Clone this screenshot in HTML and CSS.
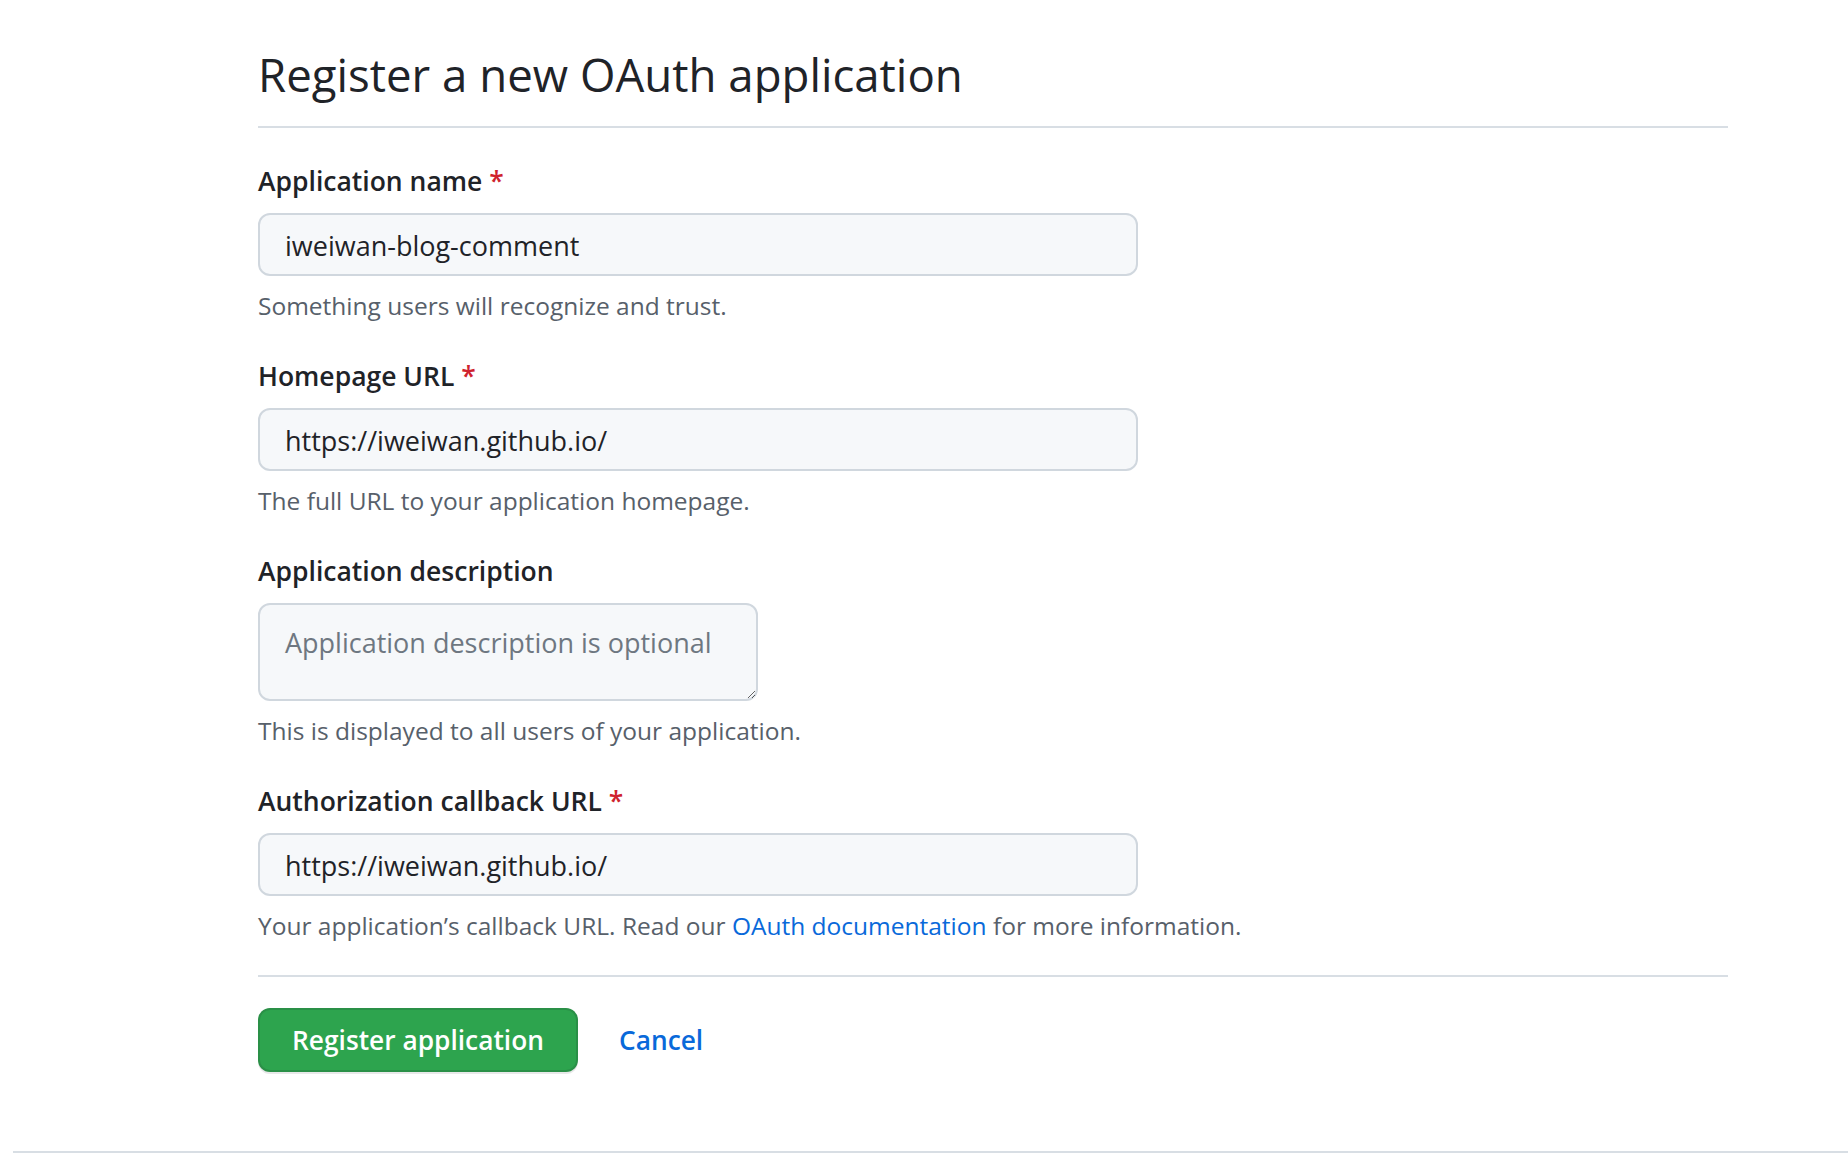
FILE: index.html
```html
<!DOCTYPE html>
<html lang="en">
<head>
<meta charset="utf-8">
<title>Register a new OAuth application</title>
<link rel="stylesheet" href="styles.css">
</head>
<body>
<main class="page">
  <div class="subhead">
    <h1 class="subhead-heading">Register a new OAuth application</h1>
  </div>
  <form class="oauth-form">
    <div class="form-group">
      <label class="form-label" for="app-name">Application name <span class="required">*</span></label>
      <input class="form-control" id="app-name" type="text" value="iweiwan-blog-comment">
      <p class="note">Something users will recognize and trust.</p>
    </div>
    <div class="form-group">
      <label class="form-label" for="app-url">Homepage URL <span class="required">*</span></label>
      <input class="form-control" id="app-url" type="text" value="https://iweiwan.github.io/">
      <p class="note">The full URL to your application homepage.</p>
    </div>
    <div class="form-group">
      <label class="form-label" for="app-desc">Application description</label>
      <textarea class="form-control textarea" id="app-desc" placeholder="Application description is optional"></textarea>
      <p class="note">This is displayed to all users of your application.</p>
    </div>
    <div class="form-group">
      <label class="form-label" for="app-cb">Authorization callback URL <span class="required">*</span></label>
      <input class="form-control" id="app-cb" type="text" value="https://iweiwan.github.io/">
      <p class="note">Your application’s callback URL. Read our <a class="link" href="#">OAuth documentation</a> for more information.</p>
    </div>
    <div class="form-actions">
      <button class="btn-primary" type="button">Register application</button>
      <a class="cancel" href="#">Cancel</a>
    </div>
  </form>
</main>
<footer class="footer"></footer>
</body>
</html>
```
FILE: styles.css
```css
html, body {
  margin: 0;
  padding: 0;
  background: #ffffff;
}
body {
  font-family: "Open Sans", "Noto Sans", "Liberation Sans", sans-serif;
  color: #24292f;
}
.page {
  margin-left: 258px;
  width: 1470px;
}
.subhead {
  padding-top: 38px;
  padding-bottom: 16px;
  border-bottom: 2px solid #d8dee4;
}
.subhead-heading {
  margin: 0;
  font-size: 45.6px;
  font-weight: 400;
  line-height: 72px;
  color: #1f2328;
}
.oauth-form {
  margin: 0;
  padding-top: 33px;
}
.form-group {
  margin-bottom: 32px;
}
.form-label {
  display: block;
  font-size: 26.5px;
  font-weight: 600;
  line-height: 40px;
  margin-bottom: 12px;
  color: #1f2328;
}
.required {
  color: #cf222e;
}
.form-control {
  display: block;
  box-sizing: border-box;
  width: 880px;
  height: 63px;
  padding: 11px 25px 9px;
  font-family: inherit;
  font-size: 27px;
  line-height: 40px;
  color: #1f2328;
  background: #f6f8fa;
  border: 2px solid #d0d7de;
  border-radius: 12px;
  outline: none;
}
.textarea {
  width: 500px;
  height: 98px;
  resize: vertical;
  padding-top: 18px;
  padding-right: 10px;
}
.textarea::placeholder {
  color: #6e7781;
}
.note {
  margin: 12px 0 0;
  font-size: 24.5px;
  line-height: 36px;
  color: #57606a;
}
.link {
  color: #0969da;
  text-decoration: none;
}
.form-actions {
  border-top: 2px solid #d8dee4;
  padding-top: 31px;
  margin-top: -1px;
  display: flex;
  align-items: center;
}
.btn-primary {
  box-sizing: border-box;
  width: 320px;
  height: 64px;
  padding: 0;
  white-space: nowrap;
  font-family: inherit;
  font-size: 26.3px;
  font-weight: 600;
  color: #ffffff;
  background: #2da44e;
  border: 2px solid rgba(27, 31, 36, 0.15);
  border-radius: 12px;
  box-shadow: 0 2px 0 rgba(27, 31, 36, 0.1);
}
.cancel {
  margin-left: 41px;
  font-size: 26.3px;
  font-weight: 600;
  color: #0969da;
  text-decoration: none;
}
.footer {
  margin-top: 79px;
  margin-left: 13px;
  border-top: 2px solid #d8dee4;
  height: 20px;
}
```
